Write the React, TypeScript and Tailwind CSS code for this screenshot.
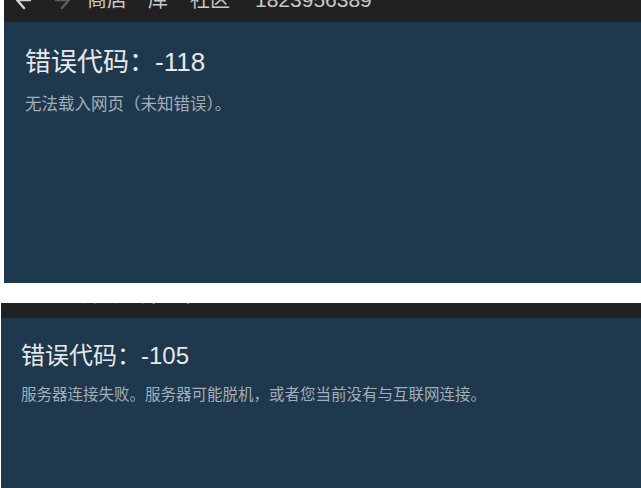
const cjk = "font-['Liberation_Sans','Noto_Sans_CJK_SC',sans-serif]";

function Arrow({ dir, color }: { dir: "left" | "right"; color: string }) {
  const d = dir === "left" ? "M15 8H2M2 8l7-8M2 8l7 8" : "M1 8h13M14 8l-7-8M14 8l-7 8";
  return (
    <svg width="16" height="18" viewBox="0 0 16 18" className={`shrink-0 overflow-visible ${color}`}>
      <path d={d} fill="none" stroke="currentColor" strokeWidth="2.4" strokeLinecap="round" strokeLinejoin="round" />
    </svg>
  );
}

function NavBar({
  height,
  pad,
  lead,
  arrows = true,
}: {
  height: string;
  pad: string;
  lead: string;
  arrows?: boolean;
}) {
  return (
    <div className={`${height} bg-[#212121] overflow-hidden flex items-end`}>
      <div className={`flex items-end ${pad} ${lead} text-[20px] leading-none text-[#c9c9c9] ${cjk}`}>
        <span className="w-[40px] flex">{arrows && <Arrow dir="left" color="text-[#d6d6d6]" />}</span>
        <span className="w-[32px] flex">{arrows && <Arrow dir="right" color="text-[#5e5e5e]" />}</span>
        <span className="w-[61px]">商店</span>
        <span className="w-[42px]">库</span>
        <span className="w-[65px]">社区</span>
        <span className="text-[21px]">1823956389</span>
      </div>
    </div>
  );
}

function ErrorPanel({
  code,
  message,
  head,
  body,
  pad,
}: {
  code: string;
  message: string;
  head: string;
  body: string;
  pad: string;
}) {
  return (
    <div className={`flex-1 bg-[#1e384d] ${pad} ${cjk}`}>
      <h1 className={`${head} leading-none text-[#e8e8e8]`}>
        错误代码：{code}
      </h1>
      <p className={`${body} leading-none text-[#a3aeb8]`}>{message}</p>
    </div>
  );
}

export default function App() {
  return (
    <div className="w-[641px] h-[488px] bg-white flex flex-col overflow-hidden">
      {/* first capture */}
      <div className="ml-[4px] h-[283px] shrink-0 flex flex-col">
        <NavBar height="h-[22px]" pad="pb-[12px]" lead="ml-[11px]" />
        <ErrorPanel
          code="-118"
          message="无法载入网页（未知错误）。"
          head="text-[26px]"
          body="mt-[21px] text-[16.5px]"
          pad="pl-[21px] pt-[27px]"
        />
      </div>

      {/* second capture, nav scrolled mostly out of view */}
      <div className="ml-[1px] mt-[20px] h-[185px] shrink-0 flex flex-col">
        <NavBar height="h-[15px]" pad="pb-[13px]" lead="ml-[7px]" arrows={false} />
        <ErrorPanel
          code="-105"
          message="服务器连接失败。服务器可能脱机，或者您当前没有与互联网连接。"
          head="text-[24px]"
          body="mt-[19px] text-[15.5px]"
          pad="pl-[20px] pt-[26px]"
        />
      </div>
    </div>
  );
}
